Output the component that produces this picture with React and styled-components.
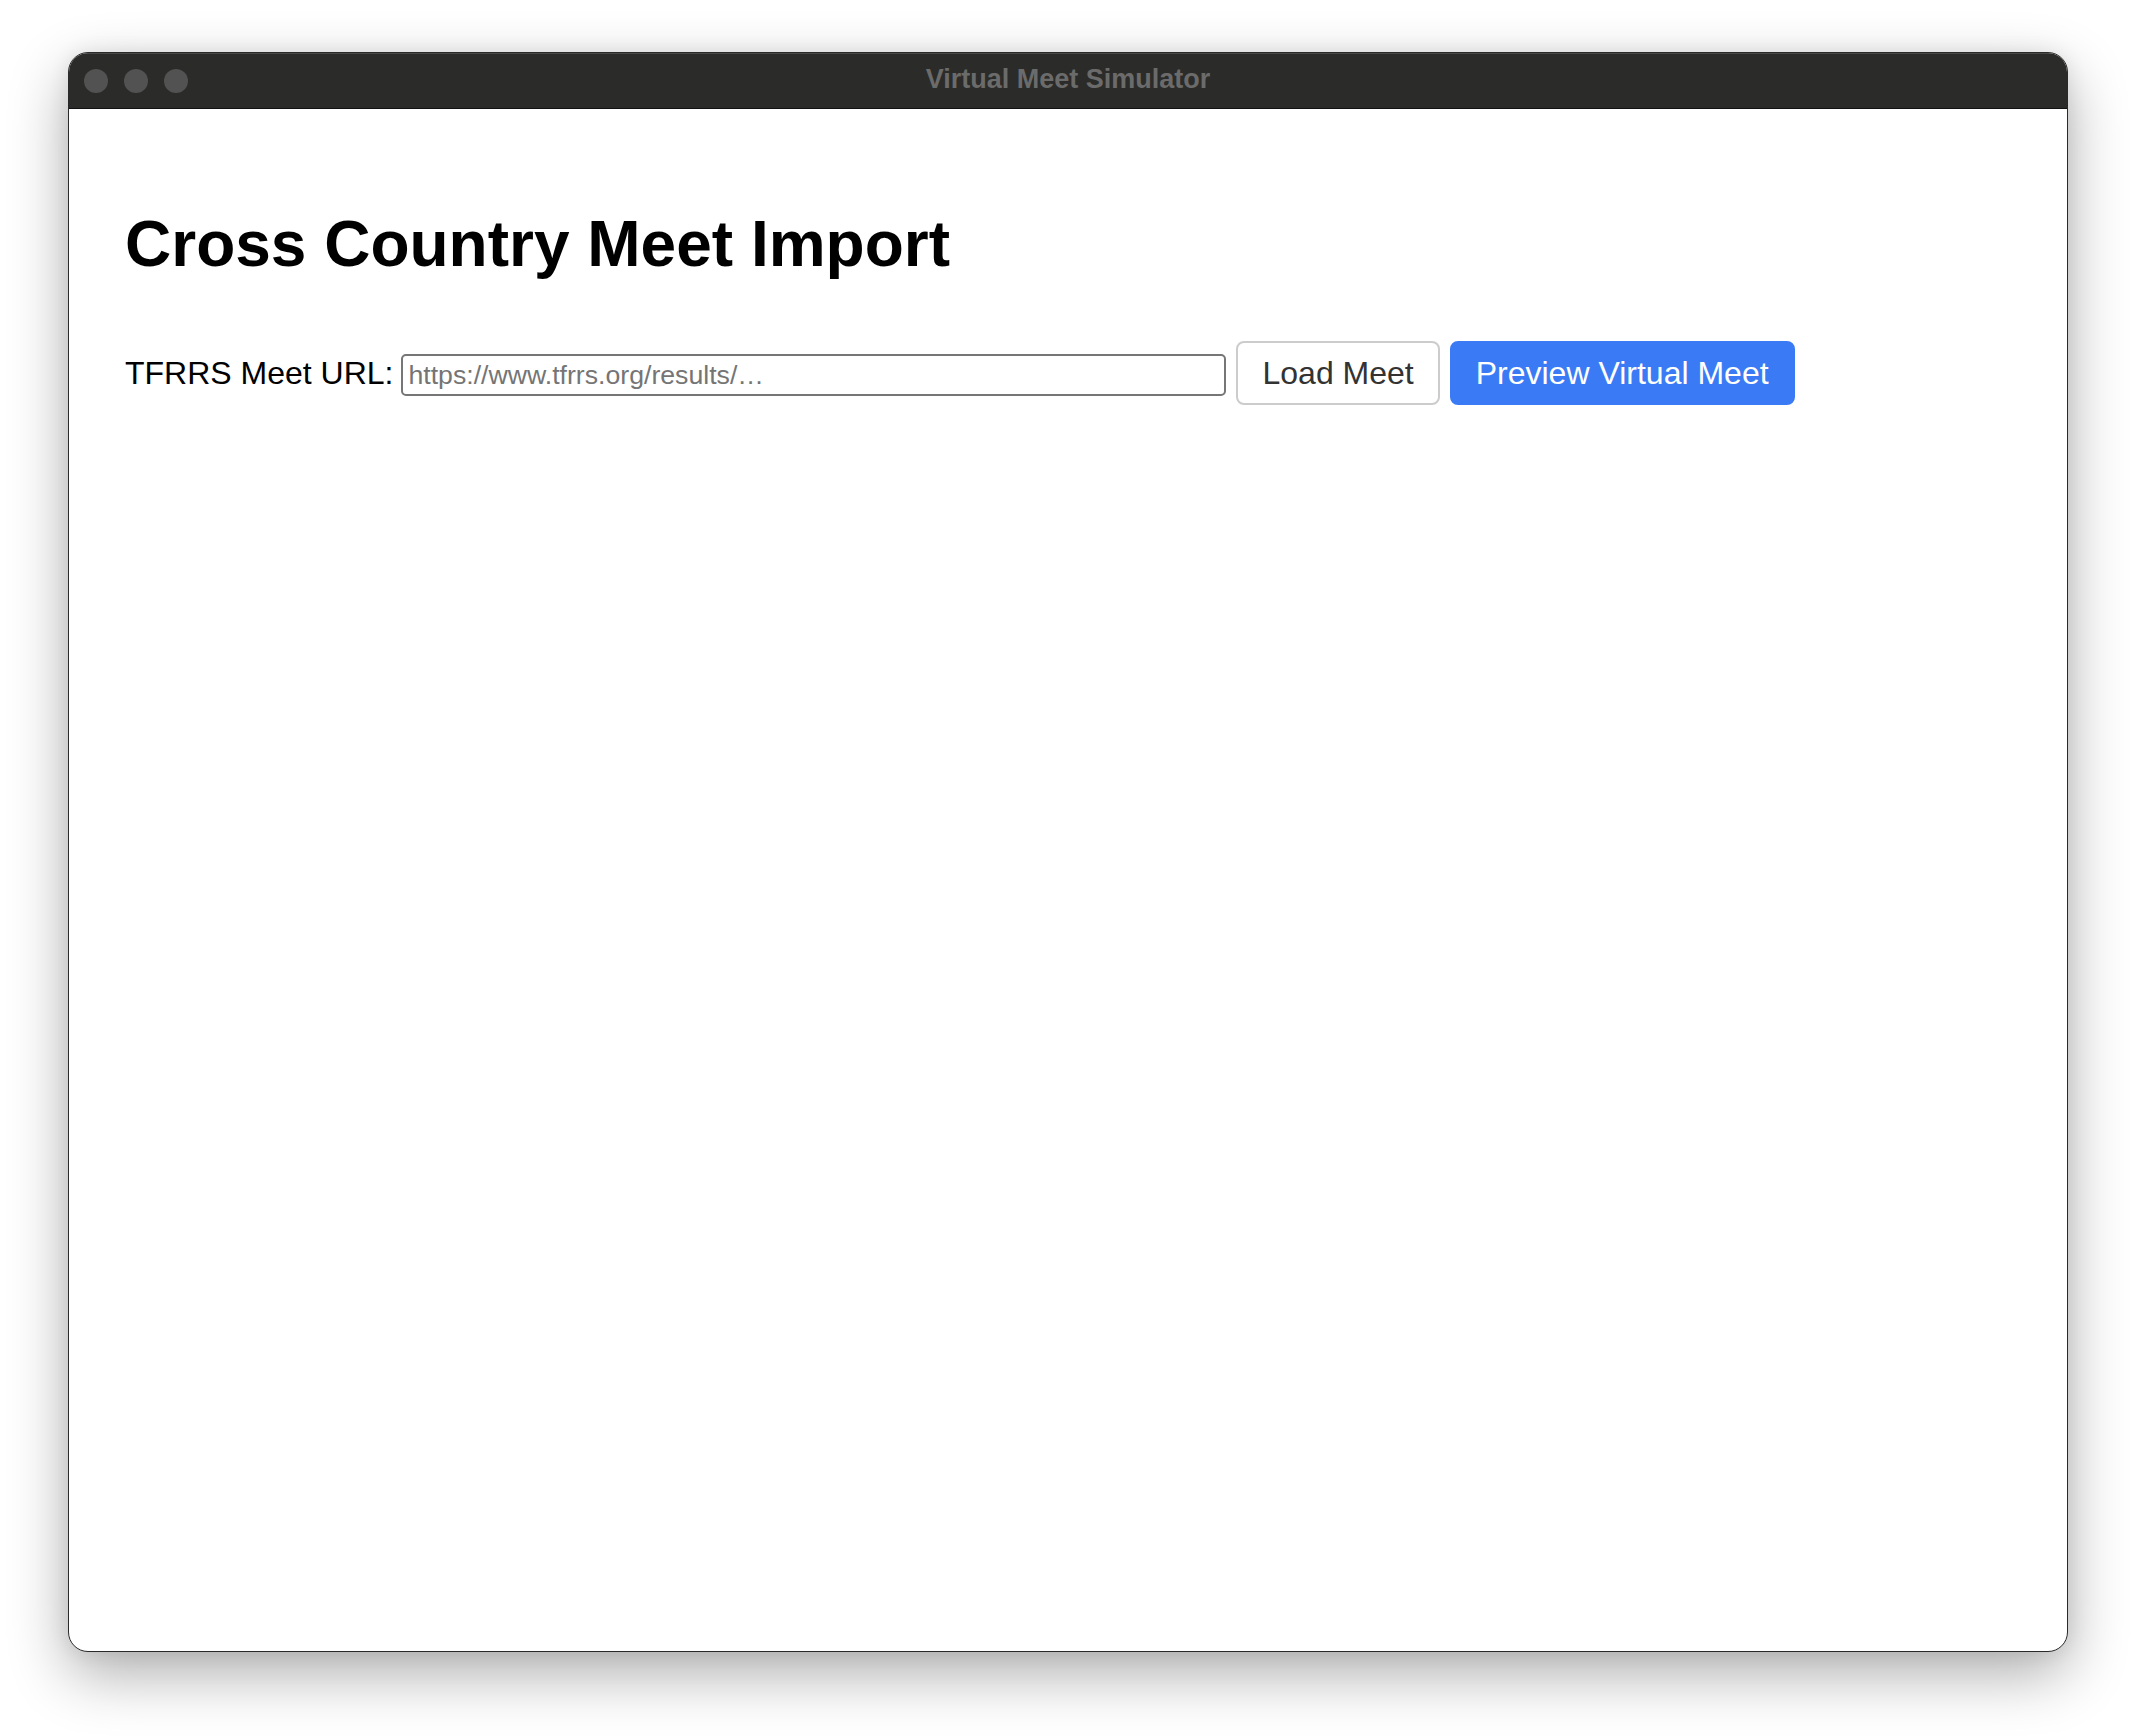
import React from 'react';
import styled, { createGlobalStyle } from 'styled-components';

const GlobalStyle = createGlobalStyle`
  html, body {
    margin: 0;
    padding: 0;
    background: #ffffff;
  }
  body {
    font-family: "Liberation Sans", Arial, sans-serif;
  }
`;

const App = () => {
  return (
    <>
      <GlobalStyle />
      <Page>
        <Window>
          <TitleBar>
            <Lights>
              <Light />
              <Light />
              <Light />
            </Lights>
            <Title>Virtual Meet Simulator</Title>
          </TitleBar>
          <Content>
            <Heading>Cross Country Meet Import</Heading>
            <FormRow>
              <Label htmlFor="meet-url">TFRRS Meet URL:</Label>
              <UrlInput id="meet-url" type="text" placeholder="https://www.tfrrs.org/results/…" />
              <Button>Load Meet</Button>
              <Button primary>Preview Virtual Meet</Button>
            </FormRow>
          </Content>
        </Window>
      </Page>
    </>
  );
};

const Page = styled.div`
  box-sizing: border-box;
  width: 2136px;
  height: 1736px;
  padding: 52px 68px 84px;
  background: #ffffff;
`;

const Window = styled.div`
  box-sizing: border-box;
  width: 2000px;
  height: 1600px;
  display: flex;
  flex-direction: column;
  border: 1px solid #2a2a2a;
  border-radius: 20px;
  overflow: hidden;
  background: #ffffff;
  box-shadow: 0 22px 60px rgba(0, 0, 0, 0.32), 0 0 20px rgba(0, 0, 0, 0.08);
`;

const TitleBar = styled.div`
  position: relative;
  box-sizing: border-box;
  height: 56px;
  flex: none;
  display: flex;
  align-items: center;
  justify-content: center;
  background: #2b2b29;
  border-bottom: 1px solid #111111;
  box-shadow: inset 0 1px 0 rgba(255, 255, 255, 0.14);
`;

const Lights = styled.div`
  position: absolute;
  left: 15px;
  top: 0;
  bottom: 0;
  display: flex;
  align-items: center;
  gap: 16px;
`;

const Light = styled.span`
  width: 24px;
  height: 24px;
  border-radius: 50%;
  background: #525252;
`;

const Title = styled.div`
  font-family: "Liberation Sans", Arial, sans-serif;
  font-weight: 700;
  font-size: 27px;
  color: #6b6b6b;
  margin-top: -2px;
`;

const Content = styled.main`
  flex: 1;
  padding: 98px 56px 0;
  color: #000000;
`;

const Heading = styled.h1`
  margin: 0 0 60px;
  font-size: 64px;
  font-weight: 700;
  line-height: normal;
`;

const FormRow = styled.div`
  display: flex;
  align-items: center;
  height: 64px;
`;

const Label = styled.label`
  font-size: 32px;
  margin-right: 8px;
`;

const UrlInput = styled.input`
  box-sizing: border-box;
  width: 825px;
  height: 42px;
  padding: 0 5px;
  margin: 4px 10px 0 0;
  border: 2px solid #767676;
  border-radius: 5px;
  font-family: "Liberation Sans", Arial, sans-serif;
  font-size: 26.67px;
  color: #000;

  &::placeholder {
    color: #757575;
  }
`;

const Button = styled.button`
  box-sizing: border-box;
  height: 64px;
  padding: 0 24px;
  margin-right: 10px;
  border: 2px solid ${(p) => (p.primary ? '#3a7bf5' : '#cccccc')};
  border-radius: 8px;
  background: ${(p) => (p.primary ? '#3a7bf5' : '#ffffff')};
  color: ${(p) => (p.primary ? '#ffffff' : '#333333')};
  font-family: "Liberation Sans", Arial, sans-serif;
  font-size: 32px;
  cursor: pointer;
`;

export default App;
